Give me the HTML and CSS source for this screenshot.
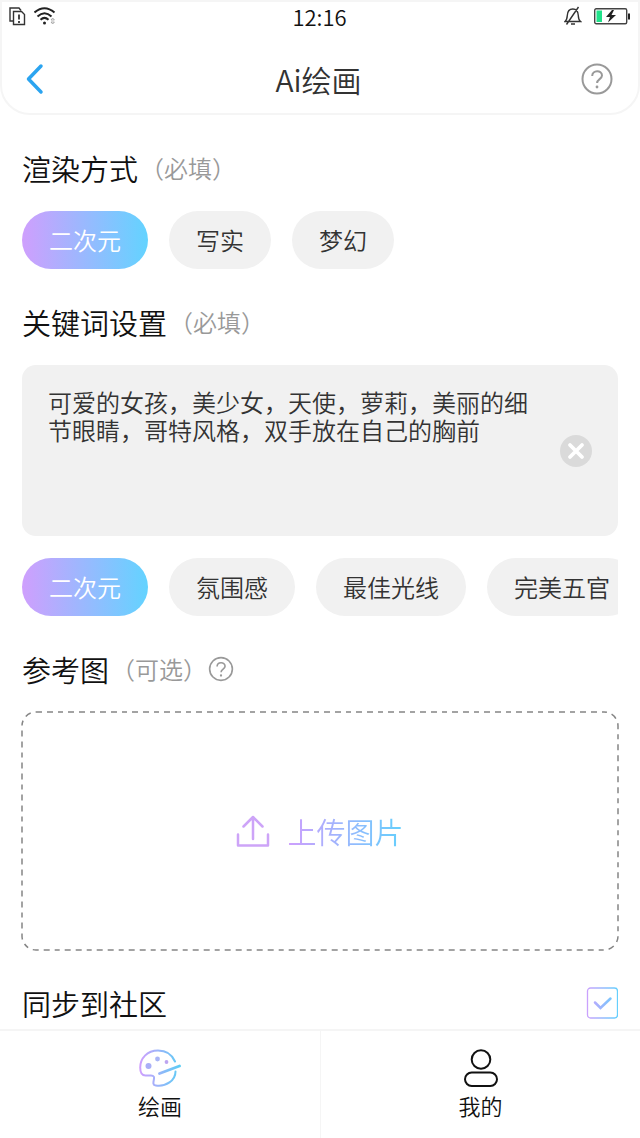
FILE: index.html
```html
<!DOCTYPE html>
<html lang="zh-CN">
<head>
<meta charset="utf-8">
<meta name="viewport" content="width=device-width, initial-scale=1">
<title>Ai绘画</title>
<link rel="stylesheet" href="styles.css">
</head>
<body>
<svg class="defs" aria-hidden="true">
  <defs>
    <linearGradient id="brand" gradientUnits="userSpaceOnUse" x1="0" y1="0" x2="32" y2="0">
      <stop offset="0" stop-color="#cf9ffd"/><stop offset="1" stop-color="#63d0fd"/>
    </linearGradient>
    <linearGradient id="palette" gradientUnits="userSpaceOnUse" x1="1" y1="0" x2="41" y2="0">
      <stop offset="0" stop-color="#cf9ffd"/><stop offset="1" stop-color="#5bcdf5"/>
    </linearGradient>
  </defs>
</svg>
<div class="app">
  <header class="header">
    <div class="status">
      <div class="status-side">
        <svg width="17" height="19" viewBox="0 0 17 19" fill="none" stroke="#333" stroke-width="1.4"><path d="M4 14H1V1h9l2 2.500"/><path d="M4.500 4.500h8l3 3v10h-11z"/><path d="M10 7.500v5M10 14v2" stroke-width="1.800"/></svg>
        <svg width="24" height="20" viewBox="0 0 24 20" fill="none" stroke="#222" stroke-width="2"><path d="M.5 6.500Q10.500-2 20.500 6.500M3.500 10.500Q10.500 4 17.500 10.500M6.500 13.700Q10.500 10 14.500 13.700"/><circle cx="10.500" cy="17" r="1.500" fill="#222" stroke="none"/><path d="M17 14l1.700-2 1.700 2zM17 16l1.700 2 1.700-2z" stroke="#999" stroke-width=".8"/></svg>
      </div>
      <time class="clock">12:16</time>
      <div class="status-side status-right">
        <svg width="18" height="20" viewBox="0 0 18 20" fill="none" stroke="#333" stroke-width="1.400"><path d="M1 15.500h15.500c-2-1.500-2-3-2.200-6-.2-4-2-6.500-5.500-6.500S3.500 5.500 3.300 9.500C3.100 12.500 3 14 1 15.500zM7 18h4M2.500 18.500L14.500 1"/></svg>
        <svg width="36" height="17" viewBox="0 0 36 17"><rect x=".7" y=".7" width="32" height="15" rx="1.500" fill="#fff" stroke="#444" stroke-width="1.400"/><path d="M2.500 2.500H8v11.500H2.500z" fill="#20e28a"/><path d="M34 5.500h2v6h-2z" fill="#222"/><path d="M18 2l-6 7h4l-2 5.500 8-7.500h-4.500L20 2z" fill="#222"/></svg>
      </div>
    </div>
    <div class="nav">
      <button class="icon-button" type="button" aria-label="返回"><svg width="20" height="32" viewBox="0 0 20 32" fill="none" stroke="#2ba4f0" stroke-width="3.500" stroke-linecap="round" stroke-linejoin="round"><path d="M17 3L4.500 16 17 29"/></svg></button>
      <h1 class="nav-title">Ai绘画</h1>
      <button class="icon-button" type="button" aria-label="帮助"><svg width="32" height="32" viewBox="0 0 32 32" fill="none" stroke="#999" stroke-width="2"><circle cx="16" cy="16" r="14.500"/><path d="M11.200 13c0-6.200 9.800-6.200 9.800-.5 0 3.500-4.900 3.800-4.900 7.500"/><circle cx="16" cy="24" r="1.400" fill="#999" stroke="none"/></svg></button>
    </div>
  </header>

  <main class="content">
    <section class="section">
      <h2 class="heading">渲染方式<span class="note">（必填）</span></h2>
      <div class="chips">
        <button class="chip chip-active" type="button">二次元</button>
        <button class="chip" type="button">写实</button>
        <button class="chip" type="button">梦幻</button>
      </div>
    </section>

    <section class="section">
      <h2><label class="heading" for="keywords">关键词设置<span class="note">（必填）</span></label></h2>
      <div class="keyword-box">
        <textarea class="keyword-input" id="keywords">可爱的女孩，美少女，天使，萝莉，美丽的细节眼睛，哥特风格，双手放在自己的胸前</textarea>
        <button class="icon-button" type="button" aria-label="清空"><svg width="32" height="32" viewBox="0 0 32 32"><circle cx="16" cy="16" r="16" fill="#dadada"/><path d="M10 10l12 12M22 10L10 22" stroke="#fff" stroke-width="3.800" stroke-linecap="round"/></svg></button>
      </div>
      <div class="chips">
        <button class="chip chip-active" type="button">二次元</button>
        <button class="chip" type="button">氛围感</button>
        <button class="chip" type="button">最佳光线</button>
        <button class="chip" type="button">完美五官</button>
      </div>
    </section>

    <section class="section">
      <div class="heading-row">
        <h2 class="heading">参考图<span class="note">（可选）</span></h2>
        <button class="icon-button" type="button" aria-label="参考图说明"><svg width="26" height="26" viewBox="0 0 32 32" fill="none" stroke="#999" stroke-width="2"><circle cx="16" cy="16" r="14"/><path d="M11.200 13c0-6.200 9.800-6.200 9.800-.5 0 3.500-4.900 3.800-4.900 7.500"/><circle cx="16" cy="24" r="1.400" fill="#999" stroke="none"/></svg></button>
      </div>
      <button class="upload" type="button">
        <svg class="upload-frame" aria-hidden="true"><rect width="100%" height="100%" rx="14" fill="none" stroke="#858585" stroke-width="1.500" stroke-dasharray="6 5 6 5 5 5"/></svg>
        <svg width="34" height="34" viewBox="0 0 34 34" fill="none" stroke="#cda4f8" stroke-width="2.500" stroke-linecap="round" stroke-linejoin="round"><path d="M17 25V3M7.500 12.500L17 3l9.500 9.500M2 20.500v11h30v-11"/></svg>
        <span class="upload-text">上传图片</span>
      </button>
    </section>

    <section class="section sync">
      <h2><label class="heading" for="sync">同步到社区</label></h2>
      <span class="check">
        <input class="check-input" type="checkbox" id="sync" checked>
        <svg class="check-mark" viewBox="0 0 32 32" fill="none" stroke="url(#brand)" aria-hidden="true"><rect x="1.500" y="1" width="30" height="30" rx="3" stroke-width="1.300"/><path d="M9 15.500l5.500 5.500L24.500 11.500" stroke-width="2.500" stroke-linecap="round"/></svg>
      </span>
    </section>
  </main>

  <nav class="tabs">
    <a class="tab" href="#draw" aria-current="page">
      <svg width="42" height="38" viewBox="0 0 42 38" fill="none" stroke="url(#palette)" stroke-width="2" stroke-linecap="round" stroke-linejoin="round"><path d="M36 12.500C33 5.500 26.500 1.500 19 1.500 8 1.500 1.200 9.500 1.200 18.500c0 5.500 1.800 8 5.300 8h5.500c3 0 3.500 1.500 2.800 4.500-.6 3-1 5 2 5.500C27 38 36.500 31.500 36.500 22.500"/><path d="M20.500 24.500L40.500 17" stroke-width="2.800"/><circle cx="9.500" cy="17" r="3" fill="#a9aff7" stroke="none"/><circle cx="18.500" cy="10" r="2.400" fill="#a9b5f7" stroke="none"/><circle cx="27.500" cy="13" r="1.900" fill="#bda5f0" stroke="none"/></svg>
      <span>绘画</span>
    </a>
    <a class="tab" href="#mine">
      <svg width="36" height="38" viewBox="0 0 36 38" fill="none" stroke="#111" stroke-width="2"><circle cx="18" cy="10.500" r="9.300"/><rect x="2" y="23.500" width="32" height="13.500" rx="6.700"/></svg>
      <span>我的</span>
    </a>
  </nav>
</div>
</body>
</html>
```
FILE: styles.css
```css
* {
  box-sizing: border-box;
}

body {
  margin: 0;
  background: #fff;
  color: #111;
  font-family: "Noto Sans CJK SC", sans-serif;
  font-weight: 350;
}

h1,
h2 {
  margin: 0;
  font-weight: 350;
}

button,
textarea {
  margin: 0;
  padding: 0;
  border: 0;
  background: none;
  color: inherit;
  font: inherit;
}

button {
  cursor: pointer;
}

svg {
  display: block;
  flex: none;
}

.defs {
  position: absolute;
  width: 0;
  height: 0;
}

.app {
  display: flex;
  flex-direction: column;
  min-height: 100vh;
}

.header {
  border: 2px solid #f5f5f5;
  border-radius: 0 0 30px 30px;
}

.status {
  display: grid;
  grid-template-columns: 1fr auto 1fr;
  align-items: center;
  height: 28px;
  padding: 0 8px 0 7px;
}

.status-side {
  display: flex;
  align-items: center;
  gap: 8px;
}

.status-right {
  justify-content: flex-end;
  gap: 12px;
}

.clock {
  color: #111;
  font-size: 22px;
  line-height: 28px;
}

.nav {
  display: grid;
  grid-template-columns: 1fr auto 1fr;
  align-items: center;
  height: 83px;
  padding: 14px 25px 0 22px;
}

.nav .icon-button:last-child {
  justify-self: end;
}

.nav-title {
  color: #333;
  font-size: 30px;
  line-height: 42px;
}

.icon-button {
  display: block;
  justify-self: start;
}

.content {
  flex: 1;
  display: flex;
  flex-direction: column;
  gap: 32px;
  padding: 32px 22px 4px;
}

.section {
  display: flex;
  flex-direction: column;
  gap: 22px;
}

.heading {
  display: flex;
  align-items: center;
  gap: 2px;
  font-size: 29px;
  line-height: 42px;
}

.heading-row {
  display: flex;
  align-items: center;
  gap: 1px;
}

.note {
  color: #999;
  font-size: 24px;
  line-height: 40px;
}

.chips {
  display: flex;
  gap: 21px;
  overflow: hidden;
}

.chip {
  flex: none;
  padding: 11px 27px;
  border-radius: 29px;
  background: #f1f1f1;
  color: #333;
  font-size: 24px;
  line-height: 36px;
}

.chip-active {
  background: linear-gradient(90deg, #cf9ffd, #63d3ff);
  color: #fff;
}

.keyword-box {
  display: flex;
  align-items: center;
  gap: 24px;
  padding: 23px 26px;
  border-radius: 14px;
  background: #f1f1f1;
}

.keyword-input {
  flex: 1;
  min-width: 0;
  height: 125px;
  outline: 0;
  resize: none;
  color: #333;
  font-size: 24px;
  line-height: 28px;
}

.upload {
  position: relative;
  display: flex;
  align-items: center;
  justify-content: center;
  gap: 17px;
  min-height: 238px;
}

.upload-frame {
  position: absolute;
  inset: 0;
  width: 100%;
  height: 100%;
  overflow: visible;
}

.upload-text {
  background: linear-gradient(90deg, #cf9ffd, #63d0fd);
  background-clip: text;
  color: transparent;
  font-size: 29px;
  line-height: 42px;
}

.sync {
  flex-direction: row;
  align-items: center;
  justify-content: space-between;
}

.check {
  position: relative;
  width: 32px;
  height: 32px;
}

.check-input {
  display: block;
  appearance: none;
  width: 100%;
  height: 100%;
  margin: 0;
}

.check-mark {
  position: absolute;
  inset: 0;
  pointer-events: none;
}

.check-input:not(:checked) + .check-mark path {
  display: none;
}

.tabs {
  position: sticky;
  bottom: 0;
  display: grid;
  grid-template-columns: 1fr 1fr;
  border-top: 2px solid #f5f5f5;
  background: #fff;
}

.tab {
  display: flex;
  flex-direction: column;
  align-items: center;
  gap: 2px;
  padding: 18px 0 17px;
  color: #111;
  font-size: 22px;
  line-height: 32px;
  text-decoration: none;
}

.tab + .tab {
  border-left: 1px solid #f5f5f5;
}
```
